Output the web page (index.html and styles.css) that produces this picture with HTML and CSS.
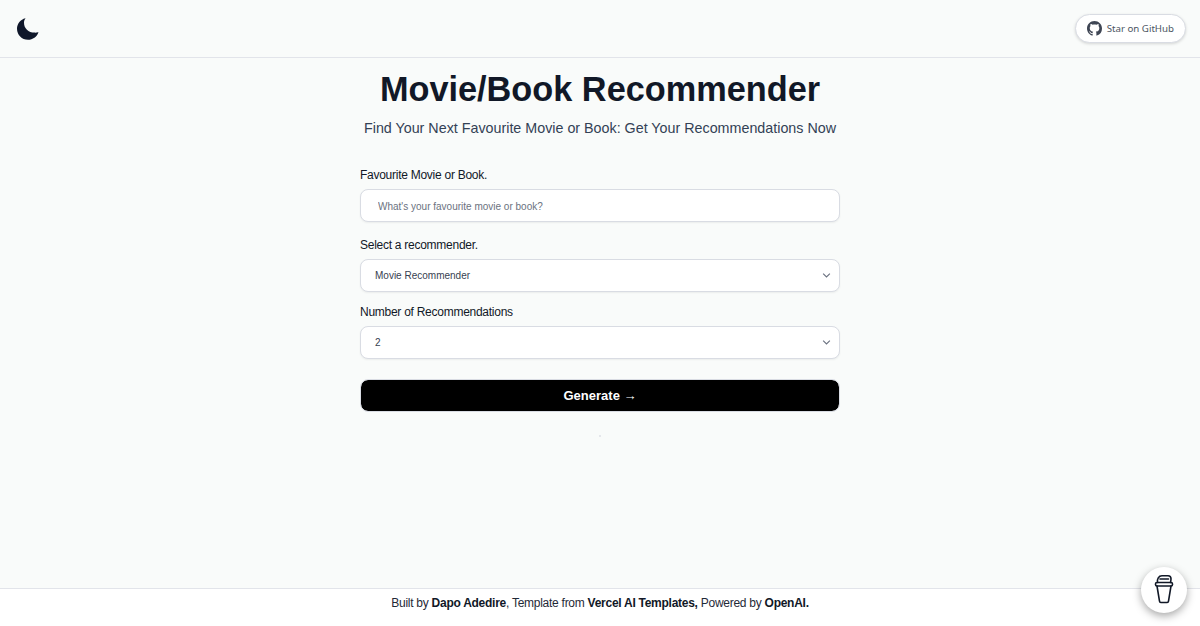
FILE: index.html
```html
<!DOCTYPE html>
<html lang="en">

<head>
    <meta charset="utf-8" />
    <title>Movie/Book Recommender</title>
    <link rel="stylesheet" href="styles.css">
</head>

<body>
    <div class="page">
        <header class="topbar">
            <svg class="moon" viewBox="0 0 24 24" width="24" height="24" aria-hidden="true">
                <path d="M9.4 1.2C4.6 2.3 1 6.6 1 11.8 1 17.9 5.9 22.8 12 22.8c4.8 0 8.9-3 10.4-7.3.1-.3-.1-.4-.4-.3-1.100.3-2.200.5-3.400.4C12.400 15.600 8 11.300 8 5.700c0-1.500.4-2.900 1.400-4.200.1-.2.200-.3 0-.3z" />
            </svg>
            <a class="star-btn" href="#">
                <svg viewBox="0 0 16 16" width="15" height="15" aria-hidden="true">
                    <path d="M8 0C3.580 0 0 3.580 0 8c0 3.540 2.290 6.530 5.470 7.590.4.070.550-.170.550-.380 0-.190-.010-.820-.010-1.490-2.010.370-2.530-.490-2.690-.940-.090-.230-.480-.940-.820-1.130-.280-.150-.680-.520-.010-.530.630-.010 1.080.580 1.230.820.720 1.210 1.870.870 2.330.660.070-.520.280-.870.510-1.070-1.780-.200-3.640-.890-3.640-3.950 0-.870.310-1.590.820-2.150-.080-.200-.360-1.020.080-2.120 0 0 .670-.210 2.200.820.640-.180 1.320-.270 2-.270s1.360.090 2 .270c1.530-1.040 2.200-.820 2.200-.820.440 1.100.160 1.920.080 2.120.510.560.820 1.270.820 2.150 0 3.070-1.870 3.750-3.650 3.950.290.250.540.730.540 1.480 0 1.070-.010 1.930-.010 2.200 0 .210.150.460.550.380A8.010 8.010 0 0 0 16 8c0-4.420-3.580-8-8-8z" />
                </svg>
                <span>Star on GitHub</span>
            </a>
        </header>

        <main class="content">
            <h1 class="title">Movie/Book Recommender</h1>
            <p class="subtitle">Find Your Next Favourite Movie or Book: Get Your Recommendations Now</p>

            <form class="form" action="" method="get">
                <div class="field field-first">
                    <label class="label" for="fav">Favourite Movie or Book.</label>
                    <input class="control text-input" id="fav" type="text" placeholder="What's your favourite movie or book?" />
                </div>
                <div class="field">
                    <label class="label" for="kind">Select a recommender.</label>
                    <div class="select-wrap">
                        <select class="control select" id="kind">
                            <option>Movie Recommender</option>
                            <option>Book Recommender</option>
                        </select>
                        <svg class="chevron" viewBox="0 0 20 20" width="15" height="15" aria-hidden="true">
                            <path d="M5.500 7.500l4.500 4.500 4.500-4.500" />
                        </svg>
                    </div>
                </div>
                <div class="field">
                    <label class="label" for="num">Number of Recommendations</label>
                    <div class="select-wrap">
                        <select class="control select" id="num">
                            <option>2</option>
                            <option>3</option>
                            <option>4</option>
                        </select>
                        <svg class="chevron" viewBox="0 0 20 20" width="15" height="15" aria-hidden="true">
                            <path d="M5.500 7.500l4.500 4.500 4.500-4.500" />
                        </svg>
                    </div>
                </div>
                <button class="generate" type="button">Generate &rarr;</button>
            </form>
            <div class="dot"></div>
        </main>

        <footer class="footer">
            <p>Built by <b>Dapo Adedire</b>, Template from <b>Vercel AI Templates,</b> Powered by <b>OpenAI.</b></p>
        </footer>
    </div>

    <a class="coffee" href="#" aria-label="Buy me a coffee">
        <svg viewBox="0 0 20 30" width="20" height="30" aria-hidden="true">
            <path d="M3 12l2.500 15.200c.1.800.6 1.300 1.300 1.300h6.400c.7 0 1.200-.5 1.300-1.300L17 12" />
            <rect x="1.500" y="8.500" width="17" height="3.500" rx="1.500" />
            <path d="M3.500 8.500C3 5 4.500 1.800 8 1.800h6c2 0 3 1.200 3 3 0 1.500-.3 2.700-.5 3.700" />
            <path d="M6 5h8.500" />
        </svg>
    </a>
</body>

</html>
```

FILE: styles.css
```css
* {
    margin: 0;
    padding: 0;
    box-sizing: border-box;
}

body {
    background: #f9fbfa;
    color: #0f172a;
    font-family: "Liberation Sans", Arial, sans-serif;
}

.page {
    height: 626px;
    display: flex;
    flex-direction: column;
}

.topbar {
    height: 58px;
    flex: none;
    display: flex;
    align-items: center;
    justify-content: space-between;
    padding: 0 14px 0 16px;
    border-bottom: 1px solid #e2e4ea;
}

.moon {
    fill: #0f172a;
}

.star-btn {
    height: 29px;
    display: flex;
    align-items: center;
    gap: 5px;
    padding: 0 11px;
    background: #fff;
    border: 1px solid #d9dce3;
    border-radius: 15px;
    box-shadow: 0 1px 3px rgba(0, 0, 0, 0.15);
    color: #4b5563;
    font-family: "Noto Sans", sans-serif;
    font-size: 9.700px;
    text-decoration: none;
}

.star-btn svg {
    fill: #3f4654;
}

.content {
    flex: 1;
    display: flex;
    flex-direction: column;
    align-items: center;
    padding-top: 10px;
}

.title {
    font-size: 34.300px;
    line-height: 42px;
    font-weight: 700;
    color: #111827;
}

.subtitle {
    margin-top: 8px;
    font-size: 14.300px;
    line-height: 20px;
    color: #334155;
}

.form {
    width: 480px;
    margin-top: 28px;
    display: flex;
    flex-direction: column;
}

.field {
    display: flex;
    flex-direction: column;
    margin-bottom: 11px;
}

.field-first {
    margin-bottom: 14px;
}

.label {
    font-size: 12px;
    line-height: 16px;
    letter-spacing: -0.022em;
    padding-top: 1px;
    margin-bottom: 6px;
    color: #111827;
}

.control {
    width: 100%;
    height: 33px;
    background: #fff;
    border: 1px solid #d9dce3;
    border-radius: 8px;
    box-shadow: 0 1px 2px rgba(0, 0, 0, 0.06);
    font-family: "Liberation Sans", Arial, sans-serif;
    font-size: 10px;
    color: #374151;
    outline: none;
}

.text-input {
    padding: 1px 17px 0;
}

.text-input::placeholder {
    color: #6b7280;
    opacity: 1;
}

.select-wrap {
    position: relative;
}

.select {
    appearance: none;
    padding: 0 14px;
}

.chevron {
    position: absolute;
    right: 6px;
    top: 9px;
    fill: none;
    stroke: #6b7280;
    stroke-width: 1.500;
    pointer-events: none;
}

.generate {
    height: 33px;
    margin-top: 9px;
    background: #000;
    background-clip: padding-box;
    border: 1px solid #d9dce3;
    border-radius: 8px;
    color: #fff;
    font-family: "Liberation Sans", Arial, sans-serif;
    font-size: 13px;
    font-weight: 700;
}

.dot {
    width: 2px;
    height: 2px;
    margin-top: 23px;
    background: #e5e7eb;
}

.footer {
    height: 38px;
    flex: none;
    padding-top: 6px;
    background: #fff;
    border-top: 1px solid #e2e4ea;
    font-size: 12px;
    line-height: 16px;
    letter-spacing: -0.022em;
    text-align: center;
    color: #1f2937;
}

.footer b {
    color: #111827;
}

.coffee {
    position: fixed;
    right: 13px;
    bottom: 13px;
    width: 46px;
    height: 46px;
    display: flex;
    align-items: center;
    justify-content: center;
    background: #fff;
    border-radius: 50%;
    box-shadow: 0 3px 8px rgba(0, 0, 0, 0.35);
}

.coffee svg {
    margin-bottom: 2px;
    fill: none;
    stroke: #111827;
    stroke-width: 1.600;
    stroke-linejoin: round;
    stroke-linecap: round;
}
```
